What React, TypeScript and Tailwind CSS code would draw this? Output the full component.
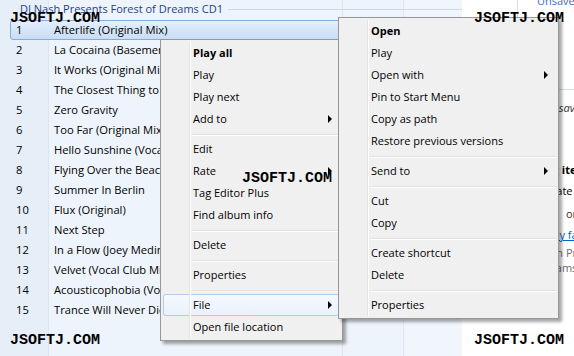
type MenuEntry = { label: string; bold?: boolean; sub?: boolean; active?: boolean } | null;

const tracks = [
  "Afterlife (Original Mix)",
  "La Cocaina (Basement Mix)",
  "It Works (Original Mix)",
  "The Closest Thing to Heaven",
  "Zero Gravity",
  "Too Far (Original Mix)",
  "Hello Sunshine (Vocal Mix)",
  "Flying Over the Beach",
  "Summer In Berlin",
  "Flux (Original)",
  "Next Step",
  "In a Flow (Joey Medina Remix)",
  "Velvet (Vocal Club Mix)",
  "Acousticophobia (Vocal Mix)",
  "Trance Will Never Die",
];

const listMenu: MenuEntry[] = [
  { label: "Play all", bold: true },
  { label: "Play" },
  { label: "Play next" },
  { label: "Add to", sub: true },
  null,
  { label: "Edit" },
  { label: "Rate", sub: true },
  { label: "Tag Editor Plus" },
  { label: "Find album info" },
  null,
  { label: "Delete" },
  null,
  { label: "Properties" },
  null,
  { label: "File", sub: true, active: true },
  { label: "Open file location" },
];

const fileMenu: MenuEntry[] = [
  { label: "Open", bold: true },
  { label: "Play" },
  { label: "Open with", sub: true },
  { label: "Pin to Start Menu" },
  { label: "Copy as path" },
  { label: "Restore previous versions" },
  null,
  { label: "Send to", sub: true },
  null,
  { label: "Cut" },
  { label: "Copy" },
  null,
  { label: "Create shortcut" },
  { label: "Delete" },
  null,
  { label: "Properties" },
];

function ContextMenu({ items, className }: { items: MenuEntry[]; className: string }) {
  return (
    <div
      className={`absolute border border-[#979797] bg-[#f0f0f0] p-[2px] shadow-[3px_3px_3px_rgba(0,0,0,0.35)] ${className}`}
    >
      {items.map((item, i) =>
        item === null ? (
          <div key={i} className="flex h-[8px] items-center">
            <div className="h-full w-[27px] shrink-0 border-r border-[#e2e3e3] shadow-[1px_0_0_#fff]" />
            <div className="ml-[2px] flex-1 border-t border-[#e0e0e0] shadow-[0_1px_0_#fff]" />
          </div>
        ) : (
          <div
            key={i}
            className={`flex h-[22px] items-center rounded-[3px] ${
              item.active
                ? "bg-gradient-to-b from-[#f6f9fe] to-[#e9f1fb] shadow-[inset_0_0_0_1px_#b0cdee]"
                : ""
            }`}
          >
            <div className="h-full w-[27px] shrink-0 border-r border-[#e2e3e3] shadow-[1px_0_0_#fff]" />
            <span className={`whitespace-nowrap pl-[3px] leading-[22px] ${item.bold ? "font-bold" : ""}`}>
              {item.label}
            </span>
            {item.sub && (
              <span className="ml-auto mr-[8px] h-0 w-0 border-y-[4px] border-l-[4px] border-y-transparent border-l-black" />
            )}
          </div>
        )
      )}
    </div>
  );
}

function Watermark({ className }: { className: string }) {
  return (
    <div
      className={`absolute font-['Liberation_Mono',monospace] text-[15px] font-bold leading-[15px] text-black ${className}`}
    >
      JSOFTJ.COM
    </div>
  );
}

export default function App() {
  return (
    <div className="relative h-[356px] w-[574px] overflow-hidden bg-white font-['Open_Sans','Noto_Sans',sans-serif] text-[11px] text-black">
      <div className="flex h-full">
        {/* now playing list */}
        <section className="h-full w-[462px] shrink-0 bg-[linear-gradient(to_right,#e6eef8_0,#e6eef8_48px,#dbe5f0_48px,#dbe5f0_49px,#eef4fb_49px,#eef4fb_342px,#dde5ef_342px,#dde5ef_343px,#eef4fb_343px,#eef4fb_403px,#dde5ef_403px,#dde5ef_404px,#f1f6fc_404px)]">
          <div className="flex h-[18px] items-center pl-[20px]">
            <span className="whitespace-nowrap leading-[16px] text-[#1e3f90]">
              DJ Nash Presents Forest of Dreams CD1
            </span>
            <div className="ml-[5px] h-px flex-1 bg-[#cdd9e7]" />
          </div>
          <div className="mt-[2px] text-[11.2px]">
            {tracks.map((t, i) => (
              <div
                key={t}
                className={`ml-[10px] mr-[6px] flex h-[20px] items-center rounded-[3px] border ${
                  i === 0
                    ? "border-[#84acdd] bg-gradient-to-b from-[#e4effb] to-[#c9ddf5]"
                    : "border-transparent"
                }`}
              >
                <span className="w-[37px] shrink-0 pl-[5px] leading-[16px]">{i + 1}</span>
                <span className="w-[294px] shrink-0 overflow-hidden whitespace-nowrap pl-[6px] leading-[16px]">
                  {t}
                </span>
              </div>
            ))}
          </div>
        </section>

        {/* list pane */}
        <aside className="flex h-full flex-1 flex-col bg-white">
          <div className="ml-[55px] flex h-[90px] shrink-0 flex-col border-b border-l border-[#d5dde7] pl-[19px]">
            <p className="-mt-[7px] whitespace-nowrap leading-[16px] text-[#3a6ec3]">Unsaved list</p>
          </div>
          <p className="ml-[83px] mt-[10px] whitespace-nowrap italic leading-[16px] text-[#333]">Unsaved list</p>
          <p className="ml-[71px] mt-[46px] whitespace-nowrap font-bold leading-[16px]">Drag items here</p>
          <p className="ml-[65px] mt-[5px] whitespace-nowrap leading-[16px]">to create a playlist.</p>
          <p className="ml-[104px] mt-[7px] whitespace-nowrap leading-[16px] text-[#333]">or</p>
          <p className="ml-[82px] mt-[5px] whitespace-nowrap leading-[16px] text-[#0066cc] underline">
            Play favorites
          </p>
          <p className="ml-[33px] mt-[2px] whitespace-nowrap leading-[16px] text-[#6d6d6d]">from DJ Nash Presents</p>
          <p className="-mt-[1px] ml-[27px] whitespace-nowrap leading-[16px] text-[#6d6d6d]">Forest of Dreams CD1</p>
        </aside>
      </div>

      <ContextMenu items={listMenu} className="left-[160px] top-[39px] w-[183px]" />
      <ContextMenu items={fileMenu} className="left-[338px] top-[17px] w-[221px]" />

      <Watermark className="left-[10px] top-[11px]" />
      <Watermark className="left-[474px] top-[11px]" />
      <Watermark className="left-[242px] top-[171px]" />
      <Watermark className="left-[10px] top-[333px]" />
      <Watermark className="left-[474px] top-[333px]" />
    </div>
  );
}
